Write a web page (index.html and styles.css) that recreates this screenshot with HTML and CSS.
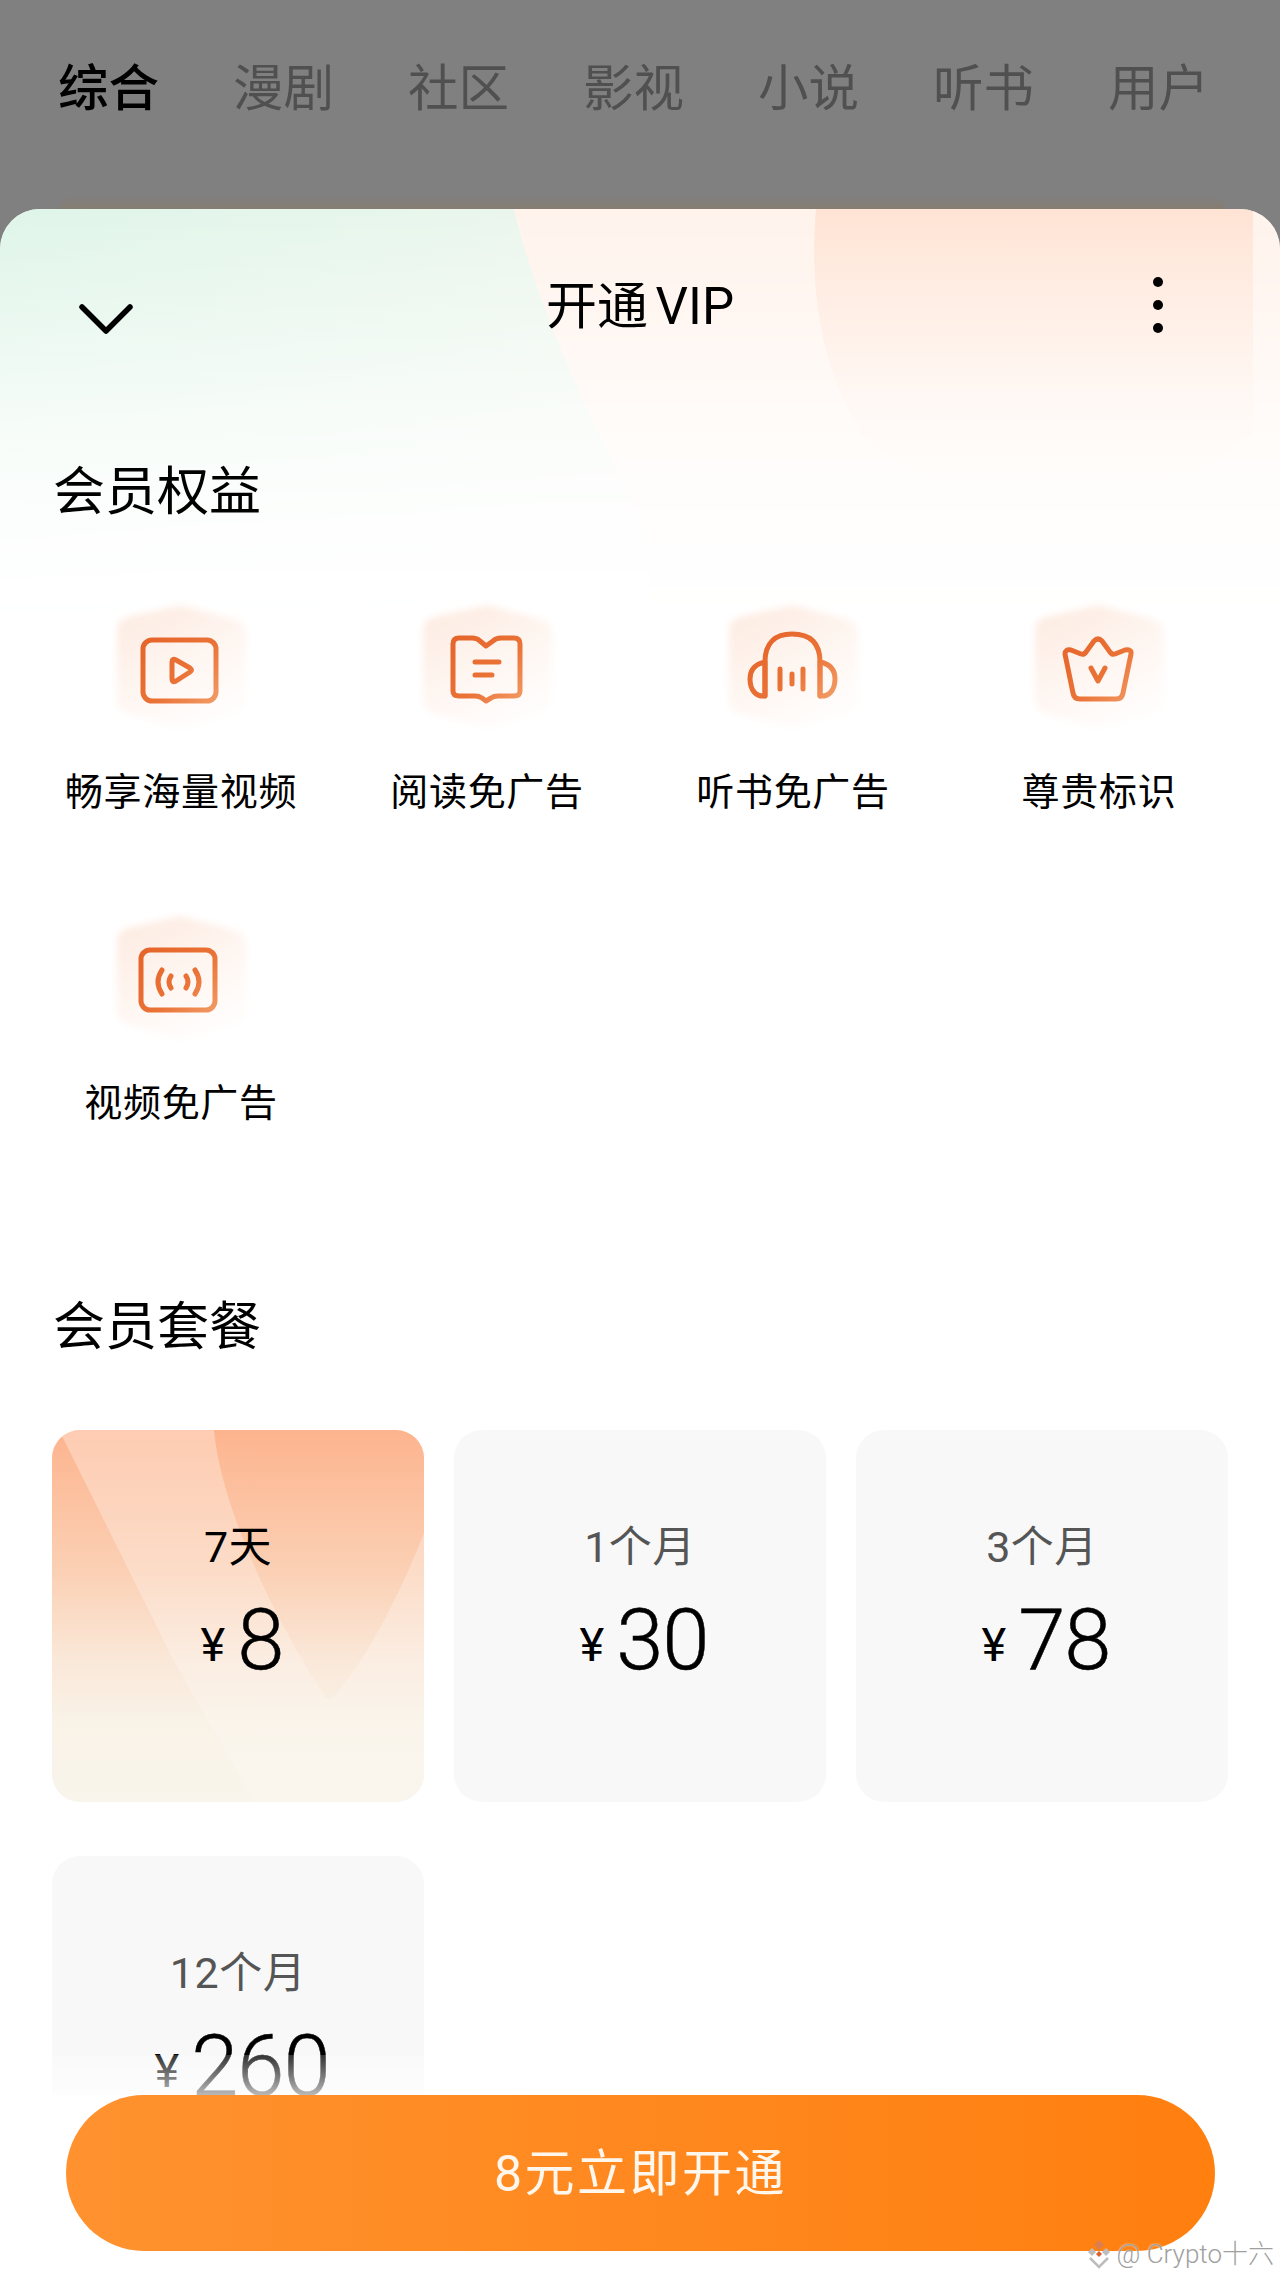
FILE: index.html
```html
<!DOCTYPE html>
<html lang="zh-CN">
<head>
<meta charset="utf-8" />
<title>开通 VIP</title>
<link rel="stylesheet" href="styles.css">
</head>
<body>
<svg class="defs" width="0" height="0">
	<defs>
		<linearGradient id="line" gradientUnits="userSpaceOnUse" x1="30" y1="30" x2="100" y2="100">
			<stop offset="0" stop-color="#e5642a" />
			<stop offset="0.55" stop-color="#ea7236" />
			<stop offset="1" stop-color="#f29c66" />
		</linearGradient>
		<linearGradient id="hex" x1="0" y1="0" x2="0.55" y2="1">
			<stop offset="0" stop-color="#fdeadf" />
			<stop offset="0.55" stop-color="#fef5f0" />
			<stop offset="1" stop-color="#fffdfc" />
		</linearGradient>
		<filter id="soft" x="-15%" y="-15%" width="130%" height="130%">
			<feGaussianBlur stdDeviation="3.5" />
		</filter>
		<linearGradient id="green" x1="0" y1="0" x2="1" y2="0.3">
			<stop offset="0" stop-color="#dff5e9" />
			<stop offset="0.6" stop-color="#e8f6ec" />
			<stop offset="1" stop-color="#eff6ee" />
		</linearGradient>
		<linearGradient id="peach" x1="0" y1="0" x2="0" y2="1">
			<stop offset="0" stop-color="#ffe3d4" />
			<stop offset="0.55" stop-color="#ffebe0" />
			<stop offset="1" stop-color="#fff3ec" />
		</linearGradient>
		<linearGradient id="planBase" x1="0" y1="0" x2="0" y2="1">
			<stop offset="0" stop-color="#fdb48e" />
			<stop offset="0.38" stop-color="#fbd0b4" />
			<stop offset="0.62" stop-color="#fae8d9" />
			<stop offset="0.78" stop-color="#f9f2e7" />
			<stop offset="1" stop-color="#f9f5ec" />
		</linearGradient>
		<linearGradient id="planBand" x1="0" y1="0" x2="0" y2="1">
			<stop offset="0" stop-color="#fff" stop-opacity="0.32" />
			<stop offset="0.6" stop-color="#fff" stop-opacity="0.24" />
			<stop offset="1" stop-color="#fff" stop-opacity="0.1" />
		</linearGradient>
	</defs>
</svg>

<div class="page">
	<ul class="tabs">
		<li class="on">综合</li>
		<li>漫剧</li>
		<li>社区</li>
		<li>影视</li>
		<li>小说</li>
		<li>听书</li>
		<li>用户</li>
	</ul>
	<div class="peek"></div>

	<div class="sheet">
		<svg class="sheet-bg" viewBox="0 0 1280 420" preserveAspectRatio="none">
			<rect width="1280" height="420" fill="#fff3ec" />
			<path d="M0 0H514C535 90 580 190 650 330V420H0Z" fill="url(#green)" />
			<path d="M816 0C808 90 826 170 862 226C930 300 1120 320 1253 226V0Z" fill="url(#peach)" />
		</svg>

		<div class="head">
			<svg class="back" width="56" height="32" viewBox="0 0 56 32">
				<path d="M4 4L28 28L52 4" fill="none" stroke="#000" stroke-width="5.5" stroke-linecap="round" stroke-linejoin="round" />
			</svg>
			<h1>开通 VIP</h1>
			<div class="more"><i></i><i></i><i></i></div>
		</div>

		<h2 class="t1">会员权益</h2>
		<ul class="rights">
			<li>
				<svg width="130" height="126" viewBox="0 0 130 126">
					<path class="hex" d="M65 1L118 15Q130 19 130 30V95Q130 105 120 109L65 125L10 109Q1 105 1 95V27Q1 16 12 13Z" />
					<g class="ico">
						<rect x="27" y="36" width="73" height="61" rx="9" />
						<path d="M56 58Q56 54 60 56L74 64Q77 66 74 68L60 77Q56 79 56 75Z" />
					</g>
				</svg>
				<p>畅享海量视频</p>
			</li>
			<li>
				<svg width="130" height="126" viewBox="0 0 130 126">
					<path class="hex" d="M65 1L118 15Q130 19 130 30V95Q130 105 120 109L65 125L10 109Q1 105 1 95V27Q1 16 12 13Z" />
					<g class="ico">
						<path d="M31 40Q31 34 37 34H50Q55 34 58 37L64 42L71 37Q74 34 79 34H92Q98 34 98 40V87Q98 92 92 92H76Q72 92 69 94L64 97L60 94Q57 92 53 92H37Q31 92 31 87Z" />
						<path d="M53 58H77M53 71H70" />
					</g>
				</svg>
				<p>阅读免广告</p>
			</li>
			<li>
				<svg width="130" height="126" viewBox="0 0 130 126">
					<path class="hex" d="M65 1L118 15Q130 19 130 30V95Q130 105 120 109L65 125L10 109Q1 105 1 95V27Q1 16 12 13Z" />
					<g class="ico">
						<path d="M37 92V58C37 38 48 30 64 30C81 30 92 38 92 58V92" />
						<path d="M37 58C27 60 22 66 22 75C22 86 28 93 37 92Z" />
						<path d="M92 58C102 60 107 66 107 75C107 86 101 93 92 92Z" />
						<path d="M52 65V85M64 70V80M75 65V85" />
					</g>
				</svg>
				<p>听书免广告</p>
			</li>
			<li>
				<svg width="130" height="126" viewBox="0 0 130 126">
					<path class="hex" d="M65 1L118 15Q130 19 130 30V95Q130 105 120 109L65 125L10 109Q1 105 1 95V27Q1 16 12 13Z" />
					<g class="ico">
						<path d="M31 50Q31 45 37 46L47 50Q50 51 52 48L60 37Q64 33 68 37L76 48Q78 51 81 50L91 46Q98 45 97 50L89 89Q88 95 82 95H46Q40 95 39 89Z" />
						<path d="M57 64L64 77L71 64" />
					</g>
				</svg>
				<p>尊贵标识</p>
			</li>
			<li>
				<svg width="130" height="126" viewBox="0 0 130 126">
					<path class="hex" d="M65 1L118 15Q130 19 130 30V95Q130 105 120 109L65 125L10 109Q1 105 1 95V27Q1 16 12 13Z" />
					<g class="ico">
						<rect x="25" y="35" width="74" height="60" rx="9" />
						<path d="M46 55Q38 67 46 79M55 61Q51 67 55 73M70 61Q74 67 70 73M79 55Q87 67 79 79" />
					</g>
				</svg>
				<p>视频免广告</p>
			</li>
		</ul>

		<h2 class="t2">会员套餐</h2>
		<div class="plans">
			<div class="plan on">
				<svg class="plan-bg" viewBox="0 0 372 372" preserveAspectRatio="none">
					<rect width="372" height="372" fill="url(#planBase)" />
					<path d="M7 0L122 231L202 372H372V103C350 160 310 240 277 271C240 220 170 90 162 0Z" fill="url(#planBand)" />
				</svg>
				<p class="name">7天</p>
				<div class="price"><span class="yen">¥</span><b>8</b></div>
			</div>
			<div class="plan">
				<p class="name">1个月</p>
				<div class="price"><span class="yen">¥</span><b>30</b></div>
			</div>
			<div class="plan">
				<p class="name">3个月</p>
				<div class="price"><span class="yen">¥</span><b>78</b></div>
			</div>
			<div class="plan">
				<p class="name">12个月</p>
				<div class="price"><span class="yen">¥</span><b>260</b></div>
			</div>
		</div>
	</div>

	<div class="foot">
		<button class="buy">8元立即开通</button>
	</div>

	<div class="mark">
		<svg width="28" height="30" viewBox="0 0 28 30">
			<path d="M14 1L19 6L14 11L9 6Z" fill="#dc7f50" />
			<path d="M7 9L11 13L7 17L3 13ZM21 9L25 13L21 17L17 13Z" fill="#bdbdbd" />
			<path d="M14 12L17 15L14 18L11 15Z" fill="#dc5f30" />
			<path d="M5 19L14 28L23 19" fill="none" stroke="#bdbdbd" stroke-width="2.5" />
		</svg>
		<span>@ Crypto十六</span>
	</div>
</div>
</body>
</html>
```

FILE: styles.css
```css
*{ margin:0; padding:0; box-sizing:border-box;}
li{ list-style:none;}

body{ background:#fff; font-family:"Roboto","Noto Sans CJK SC",sans-serif; color:#000;}

.defs{ position:absolute;}

.page{ position:relative; width:1280px; height:2277px; overflow:hidden; background:#808080;}

.tabs{ display:flex; gap:74px; height:197px; padding:59px 0 0 58px;}
.tabs li{ font-size:50.5px; line-height:60px; color:#505050;}
.tabs .on{ color:#000; font-weight:500;}

.peek{ height:12px; margin:0 55px 0 60px; border-radius:14px 14px 0 0; background:linear-gradient(#807f7e,#867d72);}

.sheet{ position:relative; height:2068px; background:#fff; border-radius:40px 40px 0 0; overflow:hidden;}
.sheet-bg{ position:absolute; left:0; top:0; width:1280px; height:420px; -webkit-mask-image:linear-gradient(#000 0,rgba(0,0,0,.7) 25%,rgba(0,0,0,.32) 50%,rgba(0,0,0,.1) 75%,transparent 100%); mask-image:linear-gradient(#000 0,rgba(0,0,0,.7) 25%,rgba(0,0,0,.32) 50%,rgba(0,0,0,.1) 75%,transparent 100%);}

.head{ position:relative; display:grid; grid-template-columns:1fr auto 1fr; align-items:center; height:60px; margin-top:68px; padding:0 78px;}
.head h1{ font-size:51px; font-weight:400; line-height:60px; word-spacing:-5px;}
.back{ margin-top:23px;}
.more{ display:flex; flex-direction:column; gap:13px; justify-self:end; margin:-5px 39px 0 0;}
.more i{ display:block; width:10px; height:10px; border-radius:50%; background:#000;}

.t1,.t2{ position:relative; font-size:52px; font-weight:400; line-height:60px; padding-left:53px;}
.t1{ margin-top:126px;}
.t2{ margin-top:170px;}

.rights{ position:relative; display:grid; grid-template-columns:repeat(4,1fr); row-gap:98px; margin-top:81px; padding:0 28px;}
.rights li{ display:flex; flex-direction:column; align-items:center;}
.rights svg{ overflow:visible;}
.rights p{ margin-top:37px; font-size:38px; line-height:50px; letter-spacing:.7px;}

.hex{ fill:url(#hex); filter:url(#soft);}
.ico{ fill:none; stroke:url(#line); stroke-width:5; stroke-linecap:round; stroke-linejoin:round;}

.plans{ display:grid; grid-template-columns:repeat(3,372px); gap:54px 30px; margin-top:72px; padding-left:52px;}
.plan{ position:relative; height:372px; padding-top:92px; border-radius:28px; background:#f8f8f8; overflow:hidden;}
.plan-bg{ position:absolute; left:0; top:0; width:100%; height:100%;}
.name{ position:relative; text-align:center; font-size:43px; line-height:50px; letter-spacing:.5px; color:#555;}
.plan.on .name{ color:#000;}
.price{ position:relative; display:flex; justify-content:center; align-items:center; gap:12px; margin:24px 0 0 8px; height:88px;}
.yen{ margin-top:9px; font-size:47px; line-height:50px;}
.price b{ font-size:85px; font-weight:300; line-height:88px; letter-spacing:-1px; -webkit-text-stroke:.5px #000;}

.foot{ position:absolute; left:0; right:0; bottom:0; height:222px; padding:40px 65px 0 66px; background:linear-gradient(rgba(255,255,255,.2) 0,rgba(255,255,255,.72) 40px,#fff 40px);}
.buy{ display:block; width:100%; height:156px; padding-bottom:8px; border:0; border-radius:78px; background:linear-gradient(90deg,#ff922f,#ff7f0f); color:#fff6ec; font-family:inherit; font-size:50px; letter-spacing:2.5px;}

.mark{ position:absolute; right:6px; bottom:8px; display:flex; align-items:center; gap:4px; color:#a0a0a0; font-size:26px; font-weight:300; line-height:30px; text-shadow:0 0 2px rgba(255,255,255,.8);}
```
